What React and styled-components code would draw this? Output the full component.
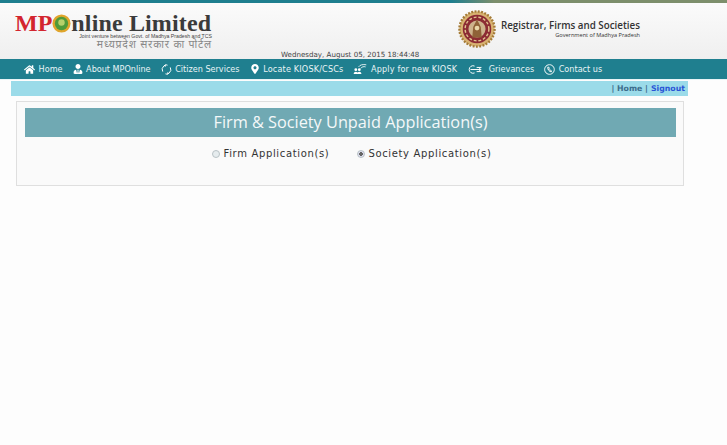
import React from "react";
import styled, { createGlobalStyle } from "styled-components";
import { FaHome, FaUserTie, FaMapMarkerAlt } from "react-icons/fa";

const Global = createGlobalStyle`
  html, body { margin: 0; padding: 0; background: #fdfdfd; }
  body { font-family: "DejaVu Sans", sans-serif; }
`;

const Page = styled.div`
  width: 727px;
  height: 445px;
  overflow: hidden;
  background: #fdfdfd;
`;

const TopLine = styled.div`
  height: 3px;
  background: linear-gradient(90deg, #1f7f8f 0, #1f7f8f 62%, #7d8f6c 68%, #7d8f6c 100%);
`;

const Header = styled.header`
  height: 56px;
  box-sizing: border-box;
  display: flex;
  justify-content: space-between;
  background: linear-gradient(#fbfbfb, #efefef);
  padding: 0 87px 0 15px;
`;

const LogoBlock = styled.div`
  width: 197px;
  padding-top: 10px;
`;

const LogoTitle = styled.div`
  display: flex;
  align-items: center;
  height: 21px;
  font-family: "Liberation Serif", serif;
  font-weight: 700;
  font-size: 24px;
  line-height: 21px;
  color: #3b3b3b;
  white-space: nowrap;
`;

const LogoRed = styled.span`
  color: #d3252f;
`;

const LogoName = styled.span`
  letter-spacing: 0.15px;
`;

const LogoSub = styled.div`
  font-family: "Liberation Sans", sans-serif;
  font-size: 5.2px;
  line-height: 5px;
  color: #444;
  text-align: right;
  white-space: nowrap;
`;

const LogoHindi = styled.div`
  font-family: "Noto Sans", "DejaVu Sans", sans-serif;
  font-size: 10.5px;
  line-height: 10px;
  letter-spacing: 0.8px;
  color: #888;
  text-align: right;
  white-space: nowrap;
`;

const DateText = styled.div`
  align-self: flex-end;
  margin: 0 auto 0 69px;
  font-size: 7.1px;
  line-height: 9px;
  color: #444;
  white-space: nowrap;
`;

const Registrar = styled.div`
  display: flex;
  align-items: center;
  gap: 5px;
  padding-top: 8px;
  height: 36px;
`;

const RegistrarText = styled.div`
  font-family: "Open Sans", sans-serif;
  color: #333;
`;

const RegistrarName = styled.div`
  font-size: 9.8px;
  font-weight: 600;
  line-height: 12px;
  white-space: nowrap;
`;

const RegistrarGov = styled.div`
  font-size: 5.6px;
  line-height: 6px;
  text-align: right;
  white-space: nowrap;
`;

const Nav = styled.nav`
  height: 20px;
  background: #1f7f8f;
  display: flex;
  align-items: center;
  padding-left: 24px;
  gap: 10px;
  border-bottom: 1px solid #e8f4f6;
`;

const NavItem = styled.a`
  display: flex;
  align-items: center;
  gap: 3.6px;
  color: #e9f4f6;
  font-size: 8.1px;
  letter-spacing: ${(p) => (p.$wide ? "0.17px" : "0")};
  white-space: nowrap;
  svg { flex: none; color: #fff; }
`;

const SubBar = styled.div`
  height: 15px;
  margin: 1px 39px 0 11px;
  background: #9bdbe9;
  display: flex;
  justify-content: flex-end;
  align-items: center;
  padding-right: 3px;
  font-size: 7.8px;
  font-weight: 700;
  color: #3d6d8c;
  gap: 3px;
`;

const SignOut = styled.span`
  color: #2a55d6;
`;

const Panel = styled.section`
  margin: 5px 43px 0 16px;
  height: 85px;
  box-sizing: border-box;
  border: 1px solid #dfdfdf;
  background: #fafafa;
  padding: 6px 7px 0 8px;
`;

const Title = styled.h1`
  margin: 0;
  height: 29px;
  background: #70a9b3;
  color: #f4f8f9;
  font-family: "Open Sans", sans-serif;
  font-weight: 400;
  font-size: 16.3px;
  line-height: 29px;
  text-align: center;
`;

const Options = styled.div`
  display: flex;
  justify-content: center;
  gap: 28px;
  margin-top: 11px;
  padding-left: 3px;
`;

const Option = styled.label`
  display: flex;
  align-items: center;
  gap: 3px;
  font-size: 10px;
  letter-spacing: 0.65px;
  color: #333;
`;

const Radio = styled.span`
  width: 6px;
  height: 6px;
  border-radius: 50%;
  border: 1px solid #b9c2c6;
  background: ${(p) => (p.$checked ? "radial-gradient(circle, #666 0 1.6px, #dde 2px)" : "#e6ecee")};
`;

function Emblem({ size = 22 }) {
  return (
    <svg width={size} height={size} viewBox="0 0 40 40" style={{ flex: "none" }}>
      <circle cx="20" cy="20" r="18.5" fill="#d8b271" stroke="#a47b38" strokeDasharray="2 1.5" strokeWidth="2.5" />
      <circle cx="20" cy="20" r="15" fill="#8c2b33" />
      <circle cx="20" cy="20" r="12.5" fill="none" stroke="#e0c48e" strokeDasharray="3 2" strokeWidth="1.5" />
      <circle cx="20" cy="20" r="9" fill="#cdb28c" />
      <path d="M15 29 L16 18 L18 14 L20 10 L22 14 L24 18 L25 29 Z" fill="#8f6238" />
      <circle cx="20" cy="19" r="2.5" fill="#e9d6a8" />
    </svg>
  );
}

function NavIcon({ d, width = 11, height = 11 }) {
  return (
    <svg width={width} height={height} viewBox={`0 0 ${width * 16 / 11} 16`} fill="none" stroke="currentColor" strokeWidth="1.4">
      <path d={d} />
    </svg>
  );
}

function ApplyIcon() {
  return (
    <svg width="14" height="12" viewBox="0 0 20 16" fill="none" stroke="currentColor">
      <circle cx="4" cy="9" r="2" fill="currentColor" stroke="none" />
      <circle cx="9" cy="9" r="2" fill="currentColor" stroke="none" />
      <path d="M1 15 C1 11 7 11 7 15 Z M6 15 C6 11 12 11 12 15 Z" fill="currentColor" stroke="none" />
      <path d="M8 5 C10 2 14 1 19 2 M11 7 C13 5 15 4 18 5" strokeWidth="1.2" />
    </svg>
  );
}

function App() {
  return (
    <Page>
      <Global />
      <TopLine />
      <Header>
        <LogoBlock>
          <LogoTitle>
            <LogoRed>MP</LogoRed>
            <svg width="19" height="19" viewBox="0 0 20 20" style={{ flex: "none" }}>
              <circle cx="10" cy="10" r="9.5" fill="#e0a52c" />
              <circle cx="10" cy="10" r="7" fill="#4f9a3a" />
              <circle cx="10" cy="9" r="3.4" fill="#b7d06a" />
            </svg>
            <LogoName>nline Limited</LogoName>
          </LogoTitle>
          <LogoSub>Joint venture between Govt. of Madhya Pradesh and TCS</LogoSub>
          <LogoHindi>मध्यप्रदेश सरकार का पोर्टल</LogoHindi>
        </LogoBlock>
        <DateText>Wednesday, August 05, 2015 18:44:48</DateText>
        <Registrar>
          <Emblem size={38} />
          <RegistrarText>
            <RegistrarName>Registrar, Firms and Societies</RegistrarName>
            <RegistrarGov>Government of Madhya Pradesh</RegistrarGov>
          </RegistrarText>
        </Registrar>
      </Header>
      <Nav>
        <NavItem><FaHome size={11} />Home</NavItem>
        <NavItem><FaUserTie size={10} />About MPOnline</NavItem>
        <NavItem><NavIcon d="M2.5 11 A6.5 6.5 0 0 1 4 3 L6 1.5 M6 4 L6.5 1 L9.5 1.7 M13.5 5 A6.5 6.5 0 0 1 12 13 L10 14.5 M10 12 L9.5 15 L6.5 14.3" />Citizen Services</NavItem>
        <NavItem $wide><FaMapMarkerAlt size={10} />Locate KIOSK/CSCs</NavItem>
        <NavItem $wide><ApplyIcon />Apply for new KIOSK</NavItem>
        <NavItem><NavIcon width={18} height={11} d="M11 3 A5.5 5.5 0 1 0 11 13 M5 8 H20 M17 5 L20 8 L17 11 M14 5 H21 M14 11 H21" />Grievances</NavItem>
        <NavItem><NavIcon d="M8 1 A7 7 0 1 1 7.9 1 M5.5 4.5 C5 8 7.5 11 10.5 11.5 L11 10 L9.5 9 L8.6 9.6 C7.8 9 7.2 8 7 7 L7.8 6.2 L6.8 4.5 Z" />Contact us</NavItem>
      </Nav>
      <SubBar>
        <span>| Home |</span>
        <SignOut>Signout</SignOut>
      </SubBar>
      <Panel>
        <Title>Firm &amp; Society Unpaid Application(s)</Title>
        <Options>
          <Option><Radio />Firm Application(s)</Option>
          <Option><Radio $checked />Society Application(s)</Option>
        </Options>
      </Panel>
    </Page>
  );
}

export default App;
